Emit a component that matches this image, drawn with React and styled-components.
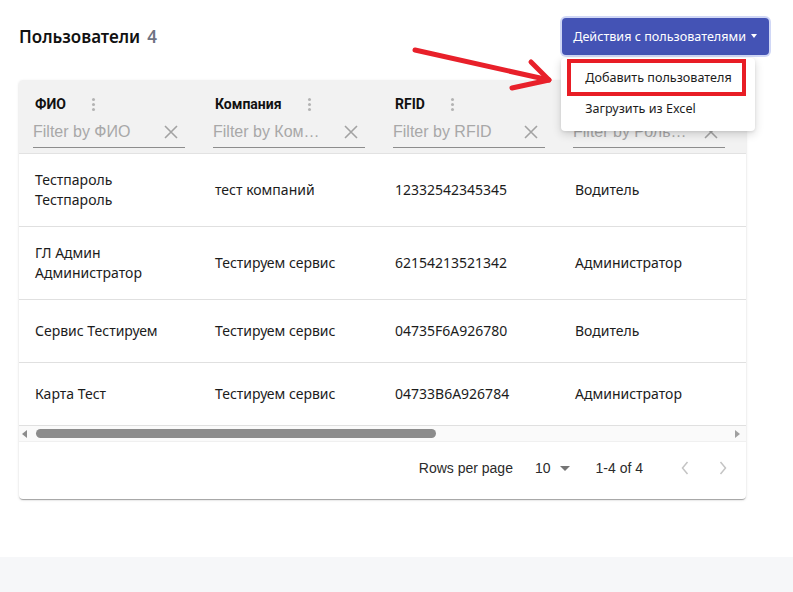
import React from 'react'
import styled, { createGlobalStyle } from 'styled-components'

const GlobalStyle = createGlobalStyle`
  html, body { margin: 0; padding: 0; background: #fff; }
  body { font-family: "Noto Sans", "Open Sans", sans-serif; color: #1c1c1c; }
  * { box-sizing: border-box; }
`

const columns = [
  { key: 'name', title: 'ФИО', filter: 'Filter by ФИО' },
  { key: 'company', title: 'Компания', filter: 'Filter by Ком…' },
  { key: 'rfid', title: 'RFID', filter: 'Filter by RFID' },
  { key: 'role', title: 'Роль', filter: 'Filter by Роль…' },
]

const rows = [
  { name: 'Тестпароль Тестпароль', company: 'тест компаний', rfid: '12332542345345', role: 'Водитель' },
  { name: 'ГЛ Админ Администратор', company: 'Тестируем сервис', rfid: '62154213521342', role: 'Администратор' },
  { name: 'Сервис Тестируем', company: 'Тестируем сервис', rfid: '04735F6A926780', role: 'Водитель' },
  { name: 'Карта Тест', company: 'Тестируем сервис', rfid: '04733B6A926784', role: 'Администратор' },
]

const Shell = styled.div`
  min-height: 100vh;
  display: flex;
  flex-direction: column;
`

const Page = styled.main`
  position: relative;
  flex: 0 0 557px;
  padding: 18px 24px 0 19px;
`

const Footer = styled.footer`
  flex: 1;
  background: #f6f7f9;
`

const TopBar = styled.div`
  display: flex;
  align-items: center;
  justify-content: space-between;
  height: 37px;
`

const Title = styled.h1`
  margin: 0;
  font-size: 17px;
  font-weight: 600;
  color: #111;
`

const Count = styled.span`
  color: #6f7383;
  margin-left: 7px;
`

const ActionsWrap = styled.div`
  position: relative;
`

const ActionsButton = styled.button`
  display: flex;
  align-items: center;
  gap: 5px;
  height: 37px;
  padding: 0 12px 0 11px;
  border: none;
  border-radius: 4px;
  background: #4453b5;
  color: #fff;
  font-family: "Noto Sans", "Open Sans", sans-serif;
  font-size: 12.6px;
  box-shadow: 0 0 0 2px rgba(120, 140, 230, 0.35);
  cursor: pointer;
`

const Caret = styled.span`
  width: 0;
  height: 0;
  border-left: 3.5px solid transparent;
  border-right: 3.5px solid transparent;
  border-top: 4px solid #fff;
  margin-top: -2px;
`

const Menu = styled.div`
  position: absolute;
  top: calc(100% + 3px);
  left: -1px;
  width: 194px;
  padding: 4px 0 7px;
  background: #fff;
  border-radius: 4px;
  box-shadow: 0 3px 10px rgba(0, 0, 0, 0.16), 0 1px 3px rgba(0, 0, 0, 0.08);
  z-index: 5;
`

const MenuItem = styled.div`
  height: 31px;
  display: flex;
  align-items: center;
  padding-left: 24px;
  font-size: 12.6px;
  color: #1c1c1c;
`

const Highlight = styled.div`
  position: absolute;
  left: 6px;
  top: 1px;
  width: 179px;
  height: 37px;
  border: 4px solid #e81d25;
  pointer-events: none;
`

const Pointer = styled.svg`
  position: absolute;
  left: 405px;
  top: 40px;
  width: 155px;
  height: 55px;
  pointer-events: none;
  z-index: 6;
`

const Card = styled.section`
  margin: 25px 23px 0 0;
  border-radius: 4px;
  overflow: hidden;
  background: #fff;
  box-shadow: 0 2px 1px -1px rgba(0, 0, 0, 0.2), 0 1px 1px rgba(0, 0, 0, 0.14), 0 1px 3px rgba(0, 0, 0, 0.12);
`

const Grid = styled.div`
  display: grid;
  grid-template-columns: repeat(4, 180px) 1fr;
`

const HeadCell = styled.div`
  background: #f2f2f2;
  padding: 14px 14px 6px;
  border-bottom: 1px solid #e2e2e2;
  height: 74px;
`

const HeadTitle = styled.div`
  display: flex;
  align-items: center;
  height: 20px;
  padding-left: 2px;
  font-family: Roboto, "Liberation Sans", sans-serif;
  font-weight: 700;
  font-size: 14px;
  color: #111;
`

const Kebab = styled.span`
  display: flex;
  flex-direction: column;
  gap: 2px;
  margin-left: 26px;
  & > i {
    width: 3px;
    height: 3px;
    border-radius: 50%;
    background: #b3b3b3;
  }
`

const FilterBox = styled.div`
  display: flex;
  align-items: center;
  height: 32px;
  margin-top: 2px;
  border-bottom: 1px solid #8d8d8d;
  padding: 1px 6px 0 0;
`

const FilterText = styled.span`
  flex: 1;
  font-family: "Liberation Sans", Arial, sans-serif;
  font-size: 16px;
  color: #a8a8a8;
  white-space: nowrap;
  overflow: hidden;
`

const Cell = styled.div`
  display: flex;
  align-items: center;
  min-height: 63px;
  padding: 16px 24px 16px 16px;
  border-bottom: 1px solid #e0e0e0;
  font-size: 14px;
  line-height: 20px;
  color: #1c1c1c;
`

const ScrollBar = styled.div`
  display: flex;
  align-items: center;
  height: 16px;
  padding: 0 6px 0 3px;
  background: #fafafa;
  border-bottom: 1px solid #f0f0f0;
`

const Thumb = styled.div`
  width: 400px;
  height: 9px;
  margin-left: 9px;
  border-radius: 5px;
  background: #8c8c8c;
`

const ArrowTip = styled.span`
  width: 0;
  height: 0;
  border-top: 4px solid transparent;
  border-bottom: 4px solid transparent;
  ${p => (p.$dir === 'left' ? 'border-right: 5px solid #8c8c8c;' : 'border-left: 5px solid #a0a0a0; margin-left: auto;')}
`

const Pagination = styled.div`
  display: flex;
  align-items: center;
  justify-content: flex-end;
  height: 57px;
  padding: 0 11px 5px 0;
  font-family: "Liberation Sans", Arial, sans-serif;
  font-size: 14px;
  color: #2b2b2b;
`

const PerPage = styled.span`
  display: flex;
  align-items: center;
  gap: 7px;
  margin-left: 22px;
`

const SmallCaret = styled.span`
  width: 0;
  height: 0;
  border-left: 5px solid transparent;
  border-right: 5px solid transparent;
  border-top: 5px solid #757575;
  margin-left: 2px;
`

const Range = styled.span`
  margin-left: 26px;
  margin-right: 30px;
`

const PageBtn = styled.span`
  display: flex;
  width: 24px;
  justify-content: center;
  margin-left: ${p => p.$gap || 0}px;
`

const ClearIcon = () => (
  <svg width="16" height="16" viewBox="0 0 16 16">
    <path d="M2 2 L14 14 M14 2 L2 14" stroke="#a3a3a3" strokeWidth="1.6" />
  </svg>
)

const Chevron = ({ dir }) => (
  <svg width="10" height="16" viewBox="0 0 10 16">
    <path d={dir === 'left' ? 'M7.5 2 L2.5 8 L7.5 14' : 'M2.5 2 L7.5 8 L2.5 14'} fill="none" stroke="#c4c4c4" strokeWidth="1.5" />
  </svg>
)

export default function App() {
  return (
    <Shell>
      <GlobalStyle />
      <Page>
        <TopBar>
          <Title>
            Пользователи<Count>4</Count>
          </Title>
          <ActionsWrap>
            <ActionsButton>
              Действия с пользователями <Caret />
            </ActionsButton>
            <Menu>
              <MenuItem>Добавить пользователя</MenuItem>
              <MenuItem>Загрузить из Excel</MenuItem>
              <Highlight />
            </Menu>
          </ActionsWrap>
        </TopBar>

        <Pointer viewBox="405 40 155 55">
          <g stroke="#e8202a" strokeWidth="5" strokeLinecap="round" fill="none">
            <path d="M415 50 L549 80" />
            <path d="M531 62 L549 80 L512 88" strokeLinejoin="round" />
          </g>
        </Pointer>

        <Card>
          <Grid>
            {columns.map(c => (
              <HeadCell key={c.key}>
                <HeadTitle>
                  {c.title}
                  <Kebab>
                    <i />
                    <i />
                    <i />
                  </Kebab>
                </HeadTitle>
                <FilterBox>
                  <FilterText>{c.filter}</FilterText>
                  <ClearIcon />
                </FilterBox>
              </HeadCell>
            ))}
            <HeadCell />
            {rows.map((r, i) => (
              <React.Fragment key={i}>
                {columns.map(c => (
                  <Cell key={c.key}>{r[c.key]}</Cell>
                ))}
                <Cell />
              </React.Fragment>
            ))}
          </Grid>
          <ScrollBar>
            <ArrowTip $dir="left" />
            <Thumb />
            <ArrowTip $dir="right" />
          </ScrollBar>
          <Pagination>
            Rows per page
            <PerPage>
              10 <SmallCaret />
            </PerPage>
            <Range>1-4 of 4</Range>
            <PageBtn>
              <Chevron dir="left" />
            </PageBtn>
            <PageBtn $gap={14}>
              <Chevron dir="right" />
            </PageBtn>
          </Pagination>
        </Card>
      </Page>
      <Footer />
    </Shell>
  )
}
